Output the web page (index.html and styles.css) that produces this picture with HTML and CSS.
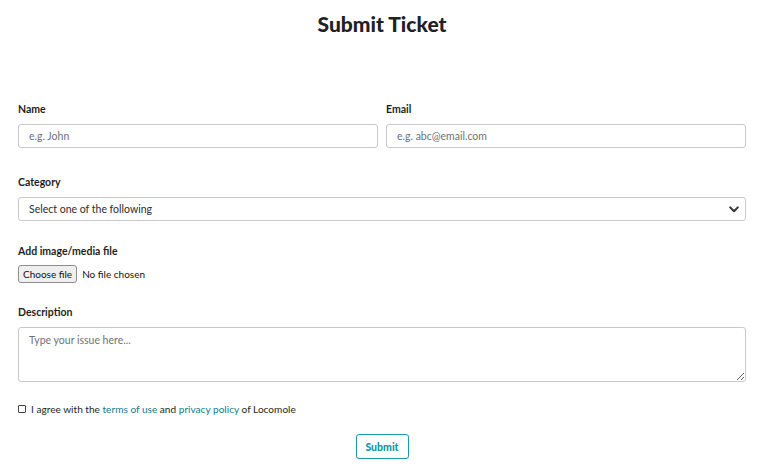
FILE: index.html
```html
<!DOCTYPE html>
<html lang="en">
<head>
<meta charset="utf-8">
<title>Submit Ticket</title>
<link rel="stylesheet" href="styles.css">
</head>
<body>
<main class="page">
  <h1 class="title">Submit Ticket</h1>
  <form class="form">
    <div class="row two">
      <div class="field">
        <label class="label" for="name">Name</label>
        <input class="input" id="name" type="text" placeholder="e.g. John">
      </div>
      <div class="field">
        <label class="label" for="email">Email</label>
        <input class="input" id="email" type="email" placeholder="e.g. abc@email.com">
      </div>
    </div>
    <div class="field cat">
      <label class="label" for="category">Category</label>
      <div class="select-wrap">
        <select class="input select" id="category">
          <option>Select one of the following</option>
        </select>
        <svg class="chev" width="10" height="7" viewBox="0 0 10 7"><path d="M1.2 1.4 L5 5.2 L8.8 1.4" fill="none" stroke="#333" stroke-width="2" stroke-linecap="round" stroke-linejoin="round"/></svg>
      </div>
    </div>
    <div class="field file">
      <span class="label">Add image/media file</span>
      <div class="file-row">
        <span class="file-btn">Choose file</span>
        <span class="file-name">No file chosen</span>
      </div>
    </div>
    <div class="field desc">
      <label class="label" for="desc">Description</label>
      <textarea class="input textarea" id="desc" placeholder="Type your issue here..."></textarea>
    </div>
    <div class="agree">
      <span class="check"></span>
      <span>I agree with the <a class="link" href="#">terms of use</a> and <a class="link" href="#">privacy policy</a> of Locomole</span>
    </div>
    <div class="actions">
      <button type="button" class="submit">Submit</button>
    </div>
  </form>
</main>
</body>
</html>
```
FILE: styles.css
```css
* { box-sizing: border-box; }
html, body { margin: 0; padding: 0; background: #fff; }
body {
  font-family: "Lato", "Open Sans", sans-serif;
  color: #1d1f21;
  font-size: 11px;
}
.page {
  width: 768px;
  padding: 0 22px 0 18px;
}
.title {
  margin: 0;
  padding-top: 11px;
  height: 102px;
  text-align: center;
  font-size: 21px;
  font-weight: 900;
  line-height: 26px;
  color: #202124;
}
.form { display: flex; flex-direction: column; }
.row.two {
  display: grid;
  grid-template-columns: 1fr 1fr;
  column-gap: 8px;
}
.field { display: flex; flex-direction: column; }
.label {
  font-weight: 700;
  font-size: 10.5px;
  line-height: 14px;
  margin-bottom: 8px;
  color: #1d1f21;
}
.input {
  font-family: inherit;
  font-size: 10.5px;
  color: #333;
  height: 24px;
  border: 1px solid #c6cacf;
  border-radius: 3px;
  padding: 0 10px;
  background: #fff;
  outline: none;
}
.input::placeholder { color: #6d7177; }
.cat { margin-top: 27px; }
.select-wrap { position: relative; }
.select {
  width: 100%;
  appearance: none;
  -webkit-appearance: none;
  color: #2a2c2f;
}
.chev { position: absolute; right: 7px; top: 9px; }
.file { margin-top: 23px; }
.file .label { margin-bottom: 0; }
.file-row {
  display: flex;
  align-items: center;
  gap: 5px;
  margin-top: 7px;
  height: 18px;
}
.file-btn {
  display: inline-flex;
  align-items: center;
  height: 18px;
  padding: 0 4px;
  border: 1px solid #8e8e8e;
  border-radius: 3px;
  background: #efefef;
  font-size: 10px;
  color: #111;
}
.file-name { font-size: 10px; color: #111; }
.desc { margin-top: 22px; }
.textarea {
  height: 55px;
  padding: 6px 10px;
  resize: vertical;
}
.agree {
  margin-top: 20px;
  display: flex;
  align-items: center;
  gap: 5px;
  font-size: 10.1px;
  line-height: 14px;
}
.check {
  width: 8px;
  height: 8px;
  border: 1px solid #444;
  border-radius: 1px;
}
.link { color: #16788e; text-decoration: none; }
.actions {
  display: flex;
  justify-content: center;
  margin-top: 18px;
}
.submit {
  font-family: inherit;
  font-weight: 900;
  font-size: 10.5px;
  color: #1a93a8;
  background: #fff;
  border: 1px solid #1a9bb0;
  border-radius: 3px;
  width: 53px;
  height: 25px;
  box-shadow: 0 1px 2px rgba(0,0,0,0.12);
}
```
